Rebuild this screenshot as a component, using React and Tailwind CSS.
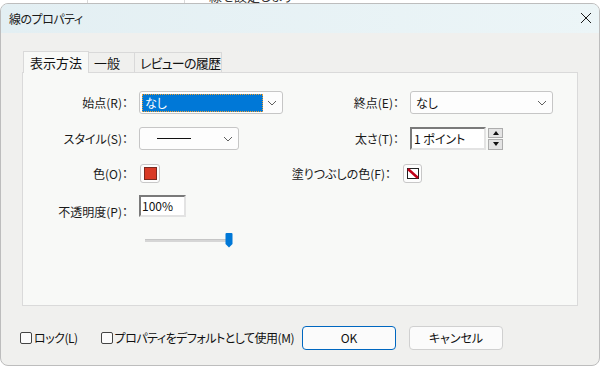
import React from "react";

const font = { fontFamily: '"Noto Sans CJK JP", "Noto Sans", sans-serif' };

function Chevron() {
  return (
    <svg width="10" height="6" viewBox="0 0 10 6" className="shrink-0">
      <path d="M1 1 L5 5 L9 1" fill="none" stroke="#606060" strokeWidth="1" />
    </svg>
  );
}

function Label({ w, children, className = "" }) {
  return (
    <div
      className={`shrink-0 whitespace-nowrap text-right text-[12px] leading-[14px] text-[#1a1a1a] ${className}`}
      style={{ width: w }}
    >
      {children}
    </div>
  );
}

export default function App() {
  return (
    <div
      className="w-[600px] h-[366px] bg-white overflow-hidden flex flex-col [font-feature-settings:'palt']"
      style={font}
    >
      {/* background window strip */}
      <div className="h-[3px] shrink-0 flex overflow-hidden">
        <div className="w-[88px] border-r border-[#d9d9d9]" />
        <div className="w-[97px] border-r border-[#d9d9d9]" />
        <div className="pl-[24px] -mt-[11px] text-[13px] leading-[14px] text-[#333] whitespace-nowrap">線を設定します</div>
      </div>

      {/* dialog */}
      <div className="flex-1 flex flex-col rounded-[8px] border border-[#bdbdbd] overflow-hidden bg-[#f0f0ee]">
        {/* title bar */}
        <div className="h-[29px] shrink-0 flex items-center justify-between pl-[8px] pr-[2px] bg-gradient-to-r from-[#e3eff3] to-[#ecf5f7]">
          <span className="text-[12px] text-[#1a1a1a] tracking-[-0.5px]">線のプロパティ</span>
          <svg width="22" height="22" viewBox="0 0 22 22" className="-mt-[2px]">
            <path d="M6 6 L16 16 M16 6 L6 16" stroke="#1a1a1a" strokeWidth="1" />
          </svg>
        </div>

        {/* body */}
        <div className="flex-1 flex flex-col pl-[21px] pr-[21px] pt-[18px]">
          {/* tabs */}
          <div className="flex items-end h-[22px] relative z-10 pl-[1px]">
            <div className="h-[22px] w-[66px] bg-[#f8f9f7] border border-b-0 border-[#d9d9d9] flex items-center justify-center text-[13px] text-[#111] whitespace-nowrap">
              表示方法
            </div>
            <div className="h-[20px] w-[46px] bg-[#f0f0ee] border-t border-r border-[#d9d9d9] flex items-center pl-[5px] text-[13px] text-[#111] mb-[1px] whitespace-nowrap">
              一般
            </div>
            <div className="h-[20px] w-[87px] bg-[#f0f0ee] border-t border-r border-[#d9d9d9] flex items-center pl-[5px] text-[13px] text-[#111] mb-[1px] tracking-[-0.8px] whitespace-nowrap overflow-hidden">
              レビューの履歴
            </div>
          </div>

          {/* panel */}
          <div className="h-[234px] -mt-[1px] bg-[#f8f9f7] border border-[#dadada] flex flex-col">
            {/* row 1 */}
            <div className="flex items-center mt-[18px] h-[23px]">
              <Label w={105}>始点(R)：</Label>
              <div className="ml-[11px] w-[144px] h-[23px] bg-[#fdfdfd] border border-[#c6c6c6] rounded-[3px] flex items-center pl-[2px] pr-[5px]">
                <div className="w-[121px] h-[18px] bg-[#0078d7] border border-dotted border-[#f0a030] flex items-center pl-[2px] text-[12px] text-white">
                  なし
                </div>
                <div className="flex-1" />
                <Chevron />
              </div>
              <Label w={116}>終点(E)：</Label>
              <div className="ml-[11px] w-[143px] h-[23px] bg-[#fdfdfd] border border-[#c6c6c6] rounded-[3px] flex items-center pl-[5px] pr-[5px] text-[12px] text-[#111]">
                <span className="flex-1">なし</span>
                <Chevron />
              </div>
            </div>

            {/* row 2 */}
            <div className="flex items-center mt-[13px] h-[23px]">
              <Label w={105}>スタイル(S)：</Label>
              <div className="ml-[11px] w-[100px] h-[23px] bg-[#fdfdfd] border border-[#c6c6c6] rounded-[3px] flex items-center pl-[17px] pr-[5px]">
                <div className="w-[34px] h-[1px] bg-[#111]" />
                <div className="flex-1" />
                <Chevron />
              </div>
              <Label w={160}>太さ(T)：</Label>
              <div className="ml-[11px] w-[76px] h-[23px] bg-white border-[2px] border-t-[#7a7a7a] border-l-[#7a7a7a] border-r-[#e3e3e3] border-b-[#e3e3e3] flex items-center pl-[2px] text-[12px] text-[#111] whitespace-nowrap">
                1 ポイント
              </div>
              <div className="ml-[2px] w-[15px] h-[22px] flex flex-col gap-[1px]">
                <div className="flex-1 bg-[#e4e4e4] border border-[#adadad] flex items-center justify-center">
                  <svg width="6" height="4" viewBox="0 0 6 4"><path d="M0 4 L3 0 L6 4 Z" fill="#111" /></svg>
                </div>
                <div className="flex-1 bg-[#e4e4e4] border border-[#adadad] flex items-center justify-center">
                  <svg width="6" height="4" viewBox="0 0 6 4"><path d="M0 0 L3 4 L6 0 Z" fill="#111" /></svg>
                </div>
              </div>
            </div>

            {/* row 3 */}
            <div className="flex items-center mt-[14px] h-[19px]">
              <Label w={105}>色(O)：</Label>
              <div className="ml-[12px] w-[20px] h-[19px] bg-[#fdfdfd] border border-[#c8c8c8] rounded-[3px] flex items-center justify-center">
                <div className="w-[13px] h-[13px] bg-[#d93a26] border border-[#7a2a20]" />
              </div>
              <Label w={231}>塗りつぶしの色(F)：</Label>
              <div className="ml-[12px] w-[19px] h-[19px] bg-[#fdfdfd] border border-[#c8c8c8] rounded-[3px] flex items-center justify-center">
                <svg width="12" height="11" viewBox="0 0 12 11">
                  <rect x="0.5" y="0.5" width="11" height="10" fill="#fff" stroke="#222" />
                  <path d="M1 1 L11 10" stroke="#c00018" strokeWidth="2.5" />
                </svg>
              </div>
            </div>

            {/* row 4 */}
            <div className="flex items-start mt-[12px] h-[22px]">
              <Label w={105} className="pt-[10px]">不透明度(P)：</Label>
              <div className="ml-[11px] w-[47px] h-[22px] bg-white border-[2px] border-t-[#7a7a7a] border-l-[#7a7a7a] border-r-[#e3e3e3] border-b-[#e3e3e3] flex items-center pl-[1px] text-[12px] text-[#111]">
                100%
              </div>
            </div>

            {/* slider */}
            <div className="flex items-center mt-[16px] h-[14px] pl-[122px]">
              <div className="w-[82px] h-[3px] bg-[#d6d6d6] border-t border-[#c6c6c6]" />
              <svg width="8" height="15" viewBox="0 0 8 15" className="-ml-[2px]">
                <path d="M0.5 1 Q0.5 0 1.5 0 L6.5 0 Q7.5 0 7.5 1 L7.5 11 L4 14.5 L0.5 11 Z" fill="#0078d7" />
              </svg>
            </div>
          </div>

          {/* bottom row */}
          <div className="flex items-center mt-[20px] h-[24px] -ml-[2px]">
            <div className="w-[12px] h-[12px] border border-[#444] rounded-[2px] bg-[#fbfbfb]" />
            <span className="ml-[2px] text-[12px] text-[#111] tracking-[-0.5px] whitespace-nowrap">ロック(L)</span>
            <div className="ml-[23px] w-[12px] h-[12px] border border-[#444] rounded-[2px] bg-[#fbfbfb]" />
            <span className="ml-[2px] text-[12px] text-[#111] tracking-[-0.5px] whitespace-nowrap">プロパティをデフォルトとして使用(M)</span>
            <div className="flex-1" />
            <div className="w-[94px] h-[24px] rounded-[4px] border border-[#0067c0] bg-[#fbfbfb] flex items-center justify-center text-[12px] text-[#111]">
              OK
            </div>
            <div className="ml-[13px] mr-[75px] w-[94px] h-[24px] rounded-[4px] border border-[#d0d0d0] bg-[#fbfbfb] flex items-center justify-center text-[12px] text-[#111]">
              キャンセル
            </div>
          </div>
        </div>
      </div>
    </div>
  );
}
